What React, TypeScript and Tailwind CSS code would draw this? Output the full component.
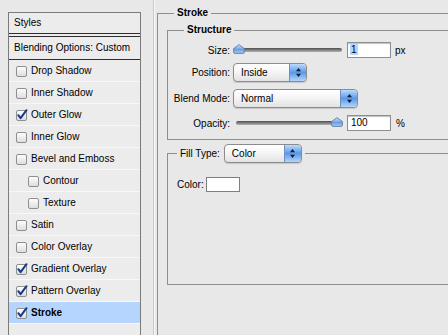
import React from 'react';

type StyleItem = { label: string; checked: boolean; indent?: boolean; selected?: boolean };

const items: StyleItem[] = [
  { label: 'Drop Shadow', checked: false },
  { label: 'Inner Shadow', checked: false },
  { label: 'Outer Glow', checked: true },
  { label: 'Inner Glow', checked: false },
  { label: 'Bevel and Emboss', checked: false },
  { label: 'Contour', checked: false, indent: true },
  { label: 'Texture', checked: false, indent: true },
  { label: 'Satin', checked: false },
  { label: 'Color Overlay', checked: false },
  { label: 'Gradient Overlay', checked: true },
  { label: 'Pattern Overlay', checked: true },
  { label: 'Stroke', checked: true, selected: true },
];

function Checkbox({ checked }: { checked: boolean }) {
  return (
    <svg width="13" height="12" viewBox="0 0 13 12" className="shrink-0">
      <defs>
        <linearGradient id="cbg" x1="0" y1="0" x2="0" y2="1">
          <stop offset="0" stopColor="#ffffff" />
          <stop offset="1" stopColor="#dcdcdc" />
        </linearGradient>
      </defs>
      <rect x="0.5" y="1.5" width="10" height="10" rx="1.5" fill="url(#cbg)" stroke="#8f8f8f" />
      {checked && (
        <path d="M2.3 6.2 L4.6 9.2 L10.5 1.2" fill="none" stroke="#173c86" strokeWidth="2" strokeLinecap="round" strokeLinejoin="round" />
      )}
    </svg>
  );
}

function Thumb() {
  return (
    <svg width="12" height="10" viewBox="0 0 12 10">
      <defs>
        <linearGradient id="thg" x1="0" y1="0" x2="0" y2="1">
          <stop offset="0" stopColor="#d7e7fb" />
          <stop offset="0.55" stopColor="#6c9ee0" />
          <stop offset="1" stopColor="#a9cbf4" />
        </linearGradient>
      </defs>
      <path d="M6 0.6 L11.4 4.6 L11.4 8 Q11.4 9.4 10 9.4 L2 9.4 Q0.6 9.4 0.6 8 L0.6 4.6 Z" fill="url(#thg)" stroke="#5a7fae" strokeWidth="0.9" />
    </svg>
  );
}

function Slider({ at }: { at: 'start' | 'end' }) {
  return (
    <div className="relative w-[109px] h-[16px] flex items-center">
      <div className="ml-[3px] w-[106px] h-[4px] rounded-full bg-gradient-to-b from-[#4e4e4e] to-[#b4b4b4]" />
      <div className={at === 'start' ? 'absolute left-0 top-[2px]' : 'absolute right-[-1px] top-[2px]'}>
        <Thumb />
      </div>
    </div>
  );
}

function Stepper() {
  return (
    <div className="w-[17px] h-full rounded-r-[4px] border-l border-[#6f8fbf] bg-gradient-to-b from-[#bcdaff] via-[#5b98e6] to-[#b2d5fb] flex items-center justify-center">
      <svg width="7" height="11" viewBox="0 0 7 11">
        <path d="M3.5 1 L6 4.2 L1 4.2 Z" fill="#0d1f3c" />
        <path d="M3.5 10 L6 6.8 L1 6.8 Z" fill="#0d1f3c" />
      </svg>
    </div>
  );
}

function Popup({ text, width }: { text: string; width: string }) {
  return (
    <div className={`${width} h-[19px] flex rounded-[4px] border border-[#8c8c8c] bg-gradient-to-b from-white via-[#f4f4f4] to-[#e2e2e2] shadow-[0_1px_1px_rgba(0,0,0,0.15)]`}>
      <span className="flex-1 pl-[7px] leading-[17px]">{text}</span>
      <Stepper />
    </div>
  );
}

function NumberBox({ value, selected }: { value: string; selected?: boolean }) {
  return (
    <div className="w-[44px] h-[16px] border border-[#8e8e8e] bg-white shadow-[inset_0_1px_1px_rgba(0,0,0,0.25)] pl-[2px] leading-[14px]">
      <span className={selected ? 'bg-[#b5d5ff] px-[1px]' : 'px-[1px]'}>{value}</span>
    </div>
  );
}

export default function App() {
  return (
    <div className="w-[448px] h-[335px] overflow-hidden bg-[#e8e8e8] flex items-start text-[10px] text-black font-['Liberation_Sans',Arial,sans-serif]">
      {/* Styles list */}
      <div className="ml-[8px] mt-[12px] w-[133px] h-[330px] shrink-0 border border-b-0 border-[#7b7b7b] bg-[#ececec]">
        <div className="h-[21px] border-b border-[#2e2e2e] pl-[5px] leading-[20px]">Styles</div>
        <div className="h-[24px] mt-[2px] border-y border-[#2e2e2e] pl-[5px] leading-[22px]">Blending Options: Custom</div>
        {items.map((it) => (
          <div
            key={it.label}
            className={`h-[22px] border-b border-[#f8f8f8] flex items-center gap-[2px] ${it.indent ? 'pl-[19px]' : 'pl-[7px]'} ${it.selected ? 'bg-[#b5d5ff] font-bold' : ''}`}
          >
            <Checkbox checked={it.checked} />
            <span>{it.label}</span>
          </div>
        ))}
      </div>

      <div className="ml-[12px] w-[2px] h-[335px] shrink-0 border-l border-r border-l-[#c9c9c9] border-r-[#f7f7f7]" />

      {/* Stroke group */}
      <fieldset className="ml-[2px] mt-[7px] w-[300px] h-[340px] shrink-0 border border-[#8e8e8e] pl-[9px]">
        <legend className="ml-[7px] px-[3px] h-[12px] leading-[12px] font-bold">Stroke</legend>

        <fieldset className="mt-[5px] w-[300px] border border-[#8e8e8e] pb-[8px]">
          <legend className="ml-[16px] px-[3px] h-[12px] leading-[12px] font-bold">Structure</legend>

          <div className="mt-[6px] h-[16px] flex items-center">
            <span className="w-[62px] text-right">Size:</span>
            <div className="ml-[3px]">
              <Slider at="start" />
            </div>
            <div className="ml-[5px]">
              <NumberBox value="1" selected />
            </div>
            <span className="ml-[4px]">px</span>
          </div>

          <div className="mt-[4px] h-[20px] flex items-center">
            <span className="w-[62px] text-right">Position:</span>
            <div className="ml-[3px]">
              <Popup text="Inside" width="w-[74px]" />
            </div>
          </div>

          <div className="mt-[6px] h-[20px] flex items-center">
            <span className="w-[62px] text-right">Blend Mode:</span>
            <div className="ml-[3px]">
              <Popup text="Normal" width="w-[125px]" />
            </div>
          </div>

          <div className="mt-[7px] h-[16px] flex items-center">
            <span className="w-[62px] text-right">Opacity:</span>
            <div className="ml-[3px]">
              <Slider at="end" />
            </div>
            <div className="ml-[5px]">
              <NumberBox value="100" />
            </div>
            <span className="ml-[5px]">%</span>
          </div>
        </fieldset>

        {/* Fill type group */}
        <fieldset className="mt-[3px] w-[300px] h-[142px] border border-[#8e8e8e]">
          <legend className="ml-[9px] px-[3px] h-[20px] flex items-center">
            <span>Fill Type:</span>
            <div className="ml-[4px]">
              <Popup text="Color" width="w-[78px]" />
            </div>
          </legend>
          <div className="mt-[14px] pl-[9px] h-[15px] flex items-center">
            <span>Color:</span>
            <div className="ml-[2px] w-[34px] h-[15px] bg-white border border-[#7e7e7e]" />
          </div>
        </fieldset>
      </fieldset>
    </div>
  );
}
